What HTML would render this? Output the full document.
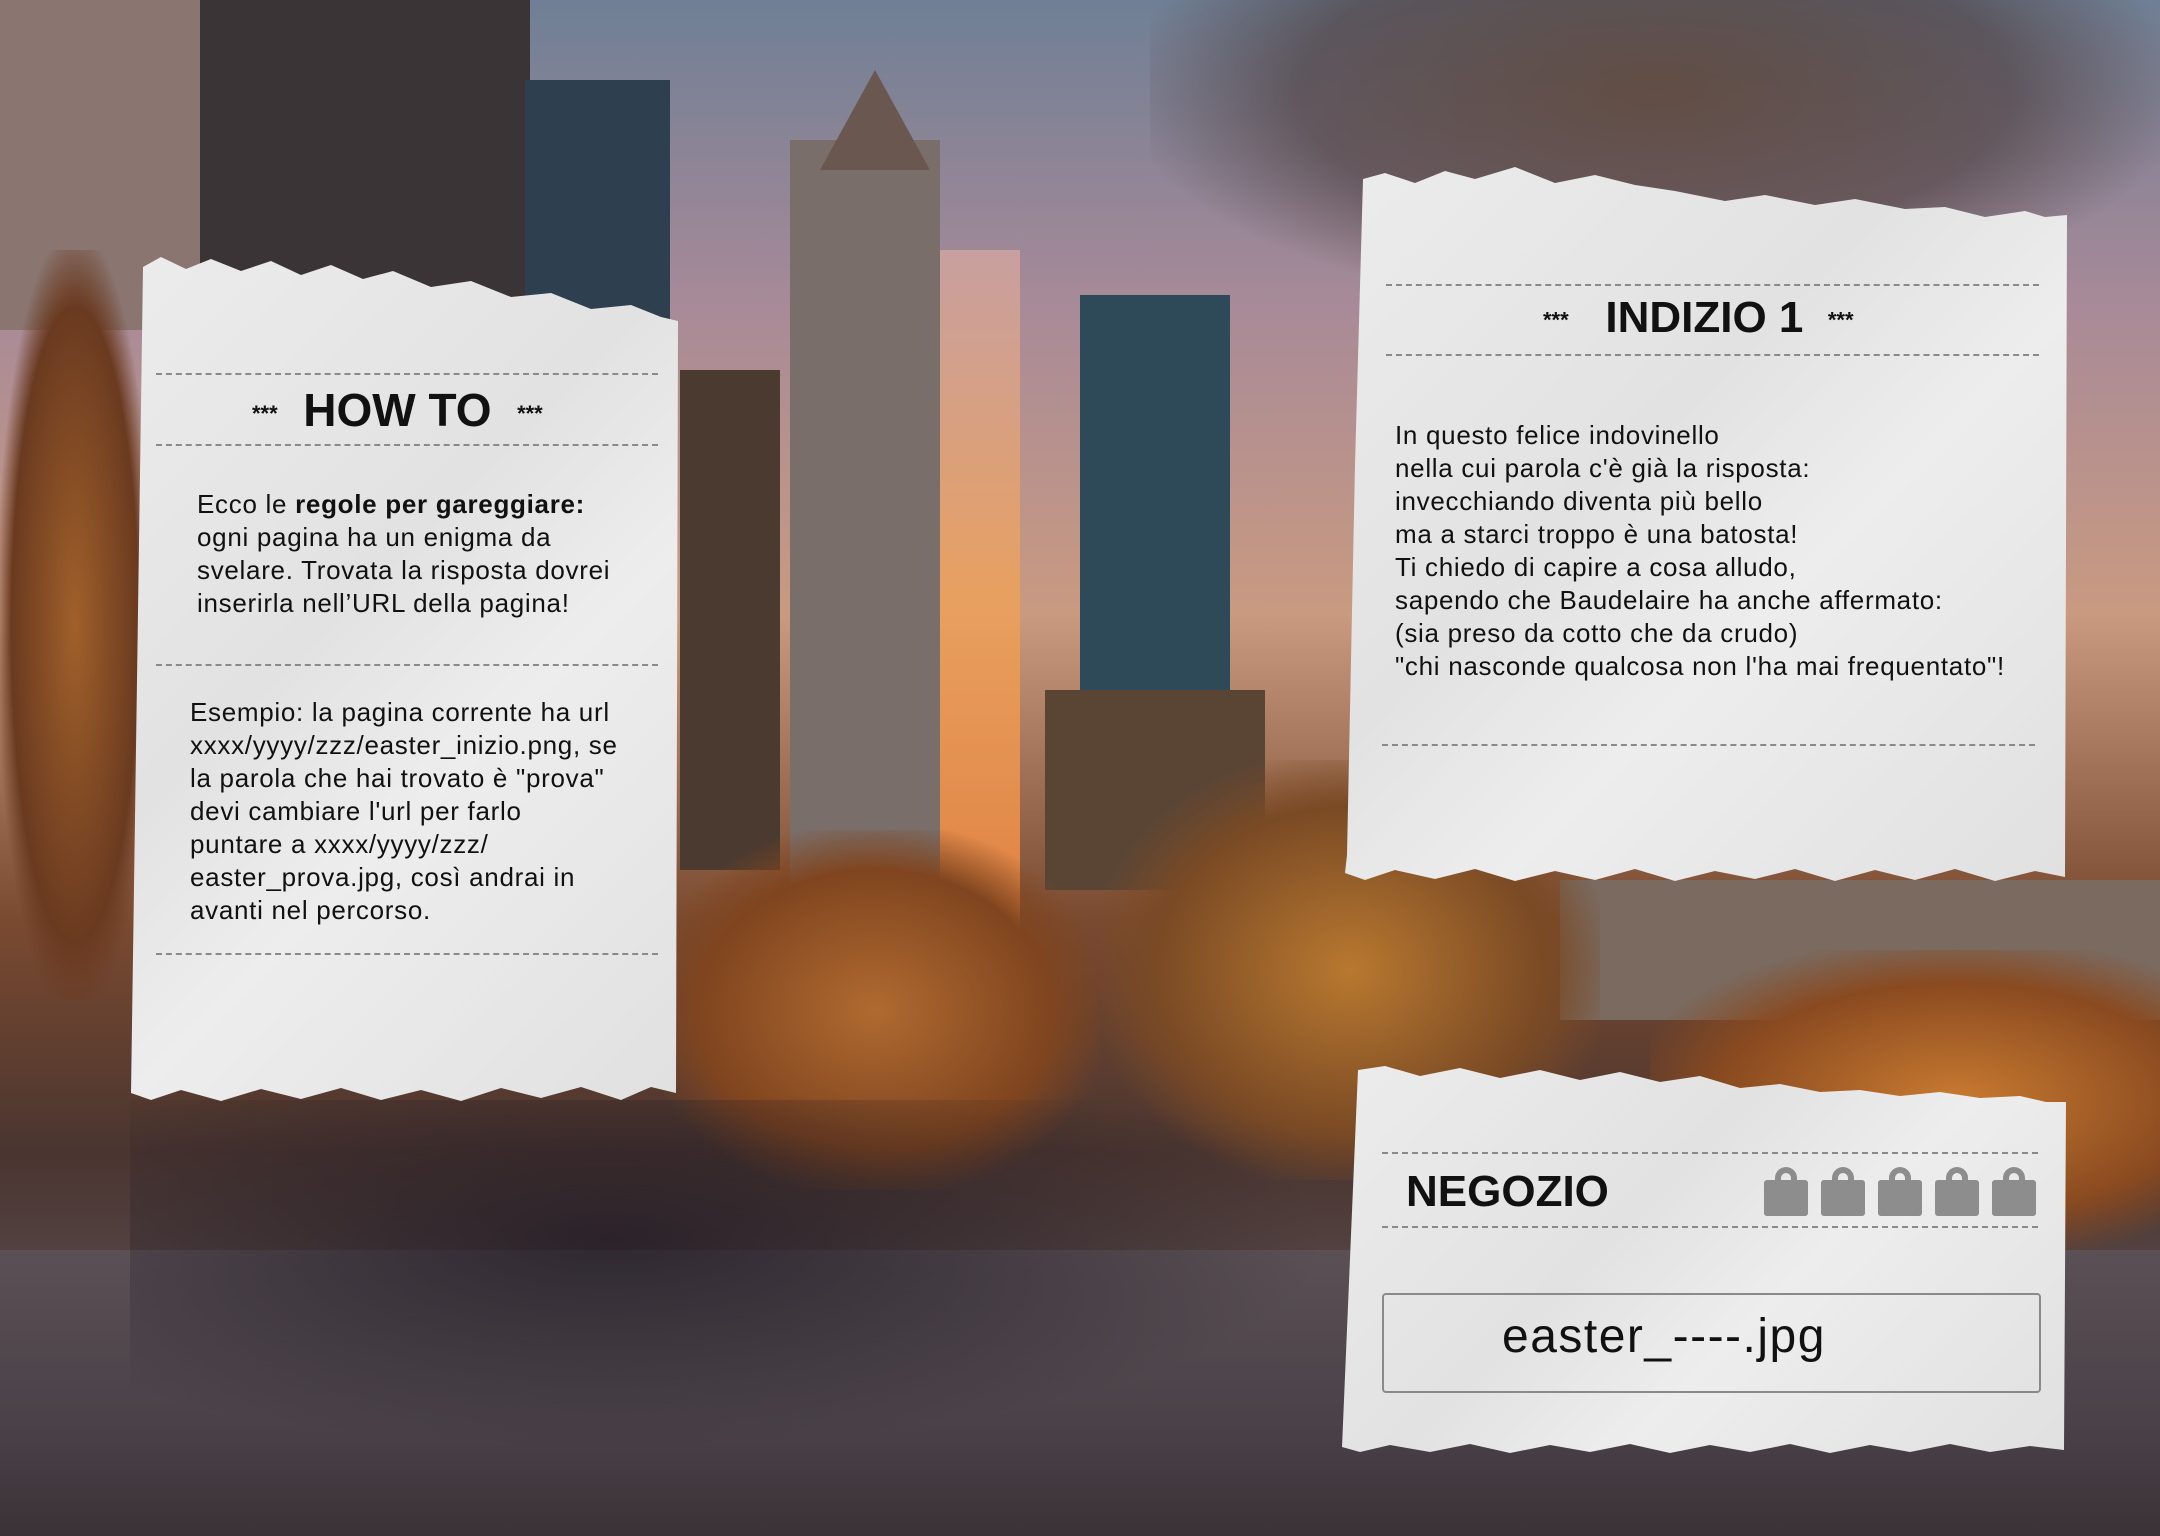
<!DOCTYPE html>
<html><head><meta charset="utf-8"><style>
html,body{margin:0;padding:0}
body{width:2160px;height:1536px;position:relative;overflow:hidden;font-family:"Liberation Sans",sans-serif;background:#3a2c28}
.abs{position:absolute}
.paper{position:absolute;background:linear-gradient(135deg,#ececec 0%,#e2e2e2 40%,#ededed 60%,#e0e0e0 100%);filter:drop-shadow(0 4px 6px rgba(0,0,0,.5))}
.dash{position:absolute;height:0;border-top:2px dashed #8a8a8a}
.t{position:absolute;color:#111;font-size:26px;line-height:33px;white-space:nowrap;letter-spacing:0.7px}
.stars{font-size:22px;font-weight:bold;vertical-align:middle}
</style></head><body>
<!-- background -->
<div class="abs" style="left:0;top:0;width:2160px;height:1536px;background:linear-gradient(180deg,#6f7f95 0%,#a88a98 20%,#c99a80 40%,#7a4a30 60%,#4a3530 75%,#5a4e50 88%,#3a3438 100%)"></div>
<div class="abs" style="left:900px;top:250px;width:120px;height:700px;background:linear-gradient(180deg,#c8a0a0,#e8a060,#e08040)"></div>
<div class="abs" style="left:0;top:0;width:220px;height:330px;background:#8a7570"></div>
<div class="abs" style="left:200px;top:0;width:330px;height:300px;background:#3a3436"></div>
<div class="abs" style="left:525px;top:80px;width:145px;height:240px;background:#2e4050"></div>
<div class="abs" style="left:680px;top:370px;width:100px;height:500px;background:#4a3a30"></div>
<div class="abs" style="left:790px;top:140px;width:150px;height:760px;background:#7a6e6a"></div>
<div class="abs" style="left:820px;top:70px;width:110px;height:100px;background:#6a5850;clip-path:polygon(50% 0,100% 100%,0 100%)"></div>
<div class="abs" style="left:1080px;top:295px;width:150px;height:400px;background:#2e4a58"></div>
<div class="abs" style="left:1045px;top:690px;width:220px;height:200px;background:#5a4535"></div>
<div class="abs" style="left:1560px;top:880px;width:600px;height:140px;background:#7a6a60"></div>
<div class="abs" style="left:0;top:250px;width:150px;height:750px;background:radial-gradient(ellipse at 50% 50%,#a0602a 0%,#6a3a20 60%,transparent 75%)"></div>
<div class="abs" style="left:650px;top:830px;width:450px;height:360px;background:radial-gradient(ellipse at 50% 50%,#b06a30 0%,#80451f 55%,transparent 75%)"></div>
<div class="abs" style="left:1100px;top:760px;width:500px;height:420px;background:radial-gradient(ellipse at 50% 50%,#b8782f 0%,#7a4a25 55%,transparent 75%)"></div>
<div class="abs" style="left:1650px;top:950px;width:510px;height:300px;background:radial-gradient(ellipse at 60% 50%,#c87a30 0%,#8a4a20 55%,transparent 78%)"></div>
<div class="abs" style="left:1150px;top:0;width:1010px;height:300px;background:radial-gradient(ellipse at 50% 30%,rgba(90,64,48,.8) 0%,rgba(74,58,56,.6) 50%,transparent 75%)"></div>
<div class="abs" style="left:0;top:1250px;width:2160px;height:286px;background:linear-gradient(180deg,#5a5055,#4a4248 60%,#3a3236)"></div>
<div class="abs" style="left:130px;top:1100px;width:1200px;height:350px;background:radial-gradient(ellipse at 40% 40%,rgba(30,25,35,.75),transparent 70%)"></div>

<!-- HOW TO paper -->
<div class="paper" style="left:131px;top:255px;width:547px;height:850px;clip-path:polygon(12px 12px,30px 2px,55px 14px,80px 4px,110px 16px,140px 6px,170px 20px,200px 10px,232px 24px,262px 16px,300px 32px,340px 26px,380px 42px,420px 38px,460px 54px,500px 50px,530px 62px,547px 66px,545px 838px,520px 832px,490px 845px,450px 832px,410px 843px,370px 833px,330px 846px,290px 835px,250px 845px,210px 833px,170px 844px,130px 834px,90px 846px,50px 835px,20px 845px,0 838px)"></div>
<div class="dash" style="left:156px;top:373px;width:502px"></div>
<div class="dash" style="left:156px;top:444px;width:502px"></div>
<div class="dash" style="left:156px;top:664px;width:502px"></div>
<div class="dash" style="left:156px;top:953px;width:502px"></div>
<div class="t" style="left:252px;top:384px;font-size:46px;line-height:52px;font-weight:bold;letter-spacing:0"><span class="stars">***</span>&nbsp; HOW TO &nbsp;<span class="stars">***</span></div>
<div class="t" style="left:197px;top:488px">Ecco le <b>regole per gareggiare:</b><br>ogni pagina ha un enigma da<br>svelare. Trovata la risposta dovrei<br>inserirla nell’URL della pagina!</div>
<div class="t" style="left:190px;top:696px">Esempio: la pagina corrente ha url<br>xxxx/yyyy/zzz/easter_inizio.png, se<br>la parola che hai trovato è "prova"<br>devi cambiare l'url per farlo<br>puntare a xxxx/yyyy/zzz/<br>easter_prova.jpg, così andrai in<br>avanti nel percorso.</div>

<!-- INDIZIO paper -->
<div class="paper" style="left:1345px;top:165px;width:722px;height:720px;clip-path:polygon(18px 14px,40px 8px,70px 18px,100px 6px,130px 14px,170px 2px,210px 18px,250px 10px,290px 20px,330px 26px,380px 36px,420px 30px,470px 40px,510px 34px,560px 44px,600px 42px,640px 52px,680px 46px,700px 52px,722px 50px,720px 712px,690px 706px,650px 716px,610px 704px,570px 715px,530px 705px,490px 716px,450px 704px,410px 714px,370px 706px,330px 716px,290px 704px,250px 715px,210px 706px,170px 716px,130px 704px,90px 714px,50px 705px,20px 715px,0 708px,2px 690px,10px 300px)"></div>
<div class="dash" style="left:1386px;top:284px;width:653px"></div>
<div class="dash" style="left:1386px;top:354px;width:653px"></div>
<div class="dash" style="left:1382px;top:744px;width:653px"></div>
<div class="t" style="left:1543px;top:293px;font-size:44px;line-height:50px;font-weight:bold;letter-spacing:0"><span class="stars">***</span>&nbsp;&nbsp; INDIZIO 1 &nbsp;<span class="stars">***</span></div>
<div class="t" style="left:1395px;top:419px">In questo felice indovinello<br>nella cui parola c'è già la risposta:<br>invecchiando diventa più bello<br>ma a starci troppo è una batosta!<br>Ti chiedo di capire a cosa alludo,<br>sapendo che Baudelaire ha anche affermato:<br>(sia preso da cotto che da crudo)<br>"chi nasconde qualcosa non l'ha mai frequentato"!</div>

<!-- NEGOZIO paper -->
<div class="paper" style="left:1340px;top:1062px;width:726px;height:392px;clip-path:polygon(18px 8px,45px 4px,80px 14px,120px 6px,160px 16px,200px 8px,240px 18px,280px 10px,320px 20px,360px 14px,400px 26px,440px 22px,480px 30px,520px 28px,560px 34px,600px 30px,640px 36px,680px 34px,706px 40px,726px 40px,724px 388px,690px 384px,650px 390px,610px 382px,570px 390px,530px 383px,490px 391px,450px 382px,410px 390px,370px 383px,330px 391px,290px 382px,250px 390px,210px 383px,170px 391px,130px 382px,90px 390px,50px 383px,20px 390px,2px 385px)"></div>
<div class="dash" style="left:1382px;top:1152px;width:656px"></div>
<div class="dash" style="left:1382px;top:1226px;width:656px"></div>
<div class="t" style="left:1406px;top:1164px;font-size:44px;line-height:56px;font-weight:bold;letter-spacing:0">NEGOZIO</div>
<svg class="abs" style="left:1764px;top:1166px" width="278" height="52" viewBox="0 0 278 52">
<g fill="#8d8d8d">
<g id="b"><rect x="0" y="14" width="44" height="36" rx="3"/><path d="M11 16V12a11 11 0 0 1 22 0v4h-6V12a5 5 0 0 0-10 0v4z"/></g>
<use href="#b" x="57"/><use href="#b" x="114"/><use href="#b" x="171"/><use href="#b" x="228"/>
</g></svg>
<div class="abs" style="left:1382px;top:1293px;width:655px;height:96px;border:2px solid #8a8a8a;border-radius:4px"></div>
<div class="t" style="left:1502px;top:1309px;font-size:48px;line-height:56px;letter-spacing:1.5px">easter_----.jpg</div>
</body></html>
